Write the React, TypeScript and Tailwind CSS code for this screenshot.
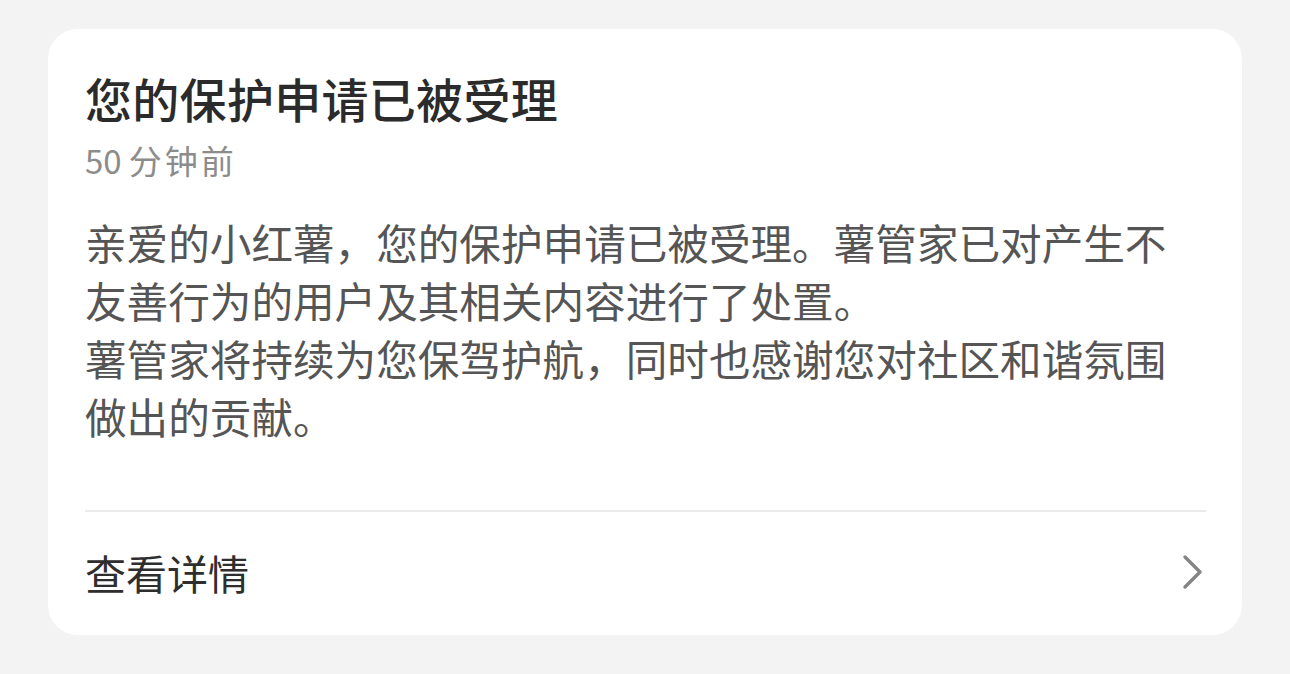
import * as React from "react"

const font = { fontFamily: '"Noto Sans CJK SC", "Noto Sans", sans-serif' }

function Chevron() {
  return (
    <svg width="22" height="36" viewBox="0 0 22 36" fill="none">
      <path
        d="M3 3 L18 18 L3 33"
        stroke="#858585"
        strokeWidth="3.4"
        strokeLinecap="round"
        strokeLinejoin="round"
      />
    </svg>
  )
}

export default function App() {
  return (
    <div className="min-h-[674px] w-[1290px] bg-[#f3f3f3] pt-[29px]" style={font}>
      <div className="ml-[48px] flex h-[606px] w-[1194px] flex-col rounded-[30px] bg-white pl-[37px] pr-[36px] pt-[39px]">
        <h1 className="text-[47px] font-medium leading-[60px] tracking-[0.3px] text-[#2b2b2b]">
          您的保护申请已被受理
        </h1>
        <div className="mt-[12px] flex text-[33px] leading-[40px] text-[#8c8c8c]">
          <span>50</span>
          <span className="ml-[7px] tracking-[3px]">分钟前</span>
        </div>
        <div className="mt-[33px] text-[41.6px] leading-[58px] text-[#555555]">
          <p>亲爱的小红薯，您的保护申请已被受理。薯管家已对产生不友善行为的用户及其相关内容进行了处置。</p>
          <p>薯管家将持续为您保驾护航，同时也感谢您对社区和谐氛围做出的贡献。</p>
        </div>
        <div className="mt-[65px] h-[2px] shrink-0 bg-[#ebebeb]" />
        <div className="flex h-[120px] shrink-0 items-center justify-between">
          <span className="text-[41px] leading-[50px] text-[#2e2e2e]">查看详情</span>
          <span className="mr-[2px] flex items-center">
            <Chevron />
          </span>
        </div>
      </div>
    </div>
  )
}
